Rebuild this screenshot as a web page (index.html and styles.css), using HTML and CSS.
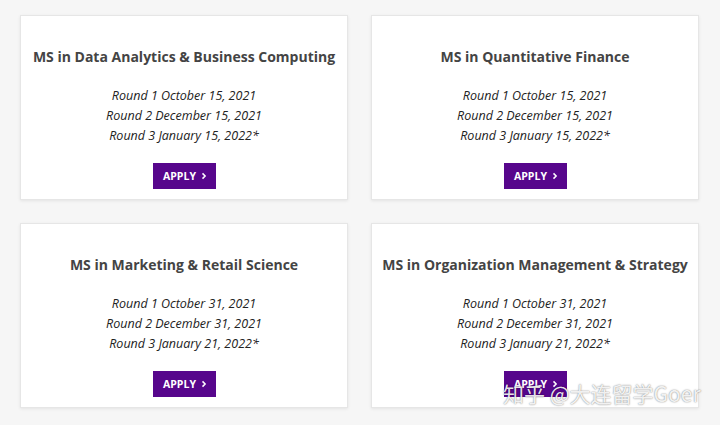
FILE: index.html
```html
<!DOCTYPE html>
<html>
<head>
<meta charset="utf-8">
<link rel="stylesheet" href="styles.css">
</head>
<body>
<div class="grid">
  <div class="card">
    <h2 class="title">MS in Data Analytics &amp; Business Computing</h2>
    <div class="dates">
      <p>Round 1 October 15, 2021</p>
      <p>Round 2 December 15, 2021</p>
      <p>Round 3 January 15, 2022*</p>
    </div>
    <a class="apply">APPLY <svg class="chev" viewBox="0 0 8 10" width="6" height="8"><path d="M2 1.5 L5.5 5 L2 8.5" fill="none" stroke="#fff" stroke-width="2"/></svg></a>
  </div>
  <div class="card">
    <h2 class="title">MS in Quantitative Finance</h2>
    <div class="dates">
      <p>Round 1 October 15, 2021</p>
      <p>Round 2 December 15, 2021</p>
      <p>Round 3 January 15, 2022*</p>
    </div>
    <a class="apply">APPLY <svg class="chev" viewBox="0 0 8 10" width="6" height="8"><path d="M2 1.5 L5.5 5 L2 8.5" fill="none" stroke="#fff" stroke-width="2"/></svg></a>
  </div>
  <div class="card">
    <h2 class="title">MS in Marketing &amp; Retail Science</h2>
    <div class="dates">
      <p>Round 1 October 31, 2021</p>
      <p>Round 2 December 31, 2021</p>
      <p>Round 3 January 21, 2022*</p>
    </div>
    <a class="apply">APPLY <svg class="chev" viewBox="0 0 8 10" width="6" height="8"><path d="M2 1.5 L5.5 5 L2 8.5" fill="none" stroke="#fff" stroke-width="2"/></svg></a>
  </div>
  <div class="card">
    <h2 class="title">MS in Organization Management &amp; Strategy</h2>
    <div class="dates">
      <p>Round 1 October 31, 2021</p>
      <p>Round 2 December 31, 2021</p>
      <p>Round 3 January 21, 2022*</p>
    </div>
    <a class="apply">APPLY <svg class="chev" viewBox="0 0 8 10" width="6" height="8"><path d="M2 1.5 L5.5 5 L2 8.5" fill="none" stroke="#fff" stroke-width="2"/></svg></a>
  </div>
</div>
<div class="watermark">知乎 @大连留学Goer</div>
</body>
</html>
```
FILE: styles.css
```css
html, body {
  margin: 0;
  padding: 0;
}
body {
  width: 720px;
  height: 425px;
  background: #f6f6f6;
  font-family: "Open Sans", "Liberation Sans", sans-serif;
  position: relative;
  overflow: hidden;
}
.grid {
  display: grid;
  grid-template-columns: 328px 328px;
  grid-auto-rows: 185px;
  column-gap: 23px;
  row-gap: 23px;
  padding: 15px 0 0 20px;
}
.card {
  background: #fff;
  border: 1px solid #e6e6e6;
  box-shadow: 0 1px 3px rgba(0,0,0,0.08);
  box-sizing: border-box;
  display: flex;
  flex-direction: column;
  align-items: center;
  padding-top: 32px;
}
.title {
  margin: 0;
  font-size: 14px;
  line-height: 18px;
  font-weight: 700;
  color: #444;
  white-space: nowrap;
}
.dates {
  margin-top: 20px;
  text-align: center;
}
.dates p {
  margin: 0;
  font-size: 12.5px;
  line-height: 20px;
  font-style: italic;
  font-weight: 500;
  color: #222;
}
.apply {
  margin-top: 17px;
  width: 63px;
  height: 26px;
  background: #57068c;
  color: #fff;
  font-size: 10.5px;
  font-weight: 700;
  display: flex;
  align-items: center;
  justify-content: center;
  gap: 5px;
  box-sizing: border-box;
  padding-left: 2px;
}
.chev {
  display: block;
}
.watermark {
  position: absolute;
  left: 503px;
  top: 378px;
  font-family: "Noto Sans CJK SC", sans-serif;
  font-size: 21px;
  line-height: 30px;
  color: rgba(255,255,255,0.9);
  text-shadow: 0 0 2px rgba(0,0,0,0.35), 0 0 1px rgba(0,0,0,0.3);
  white-space: nowrap;
}
```
